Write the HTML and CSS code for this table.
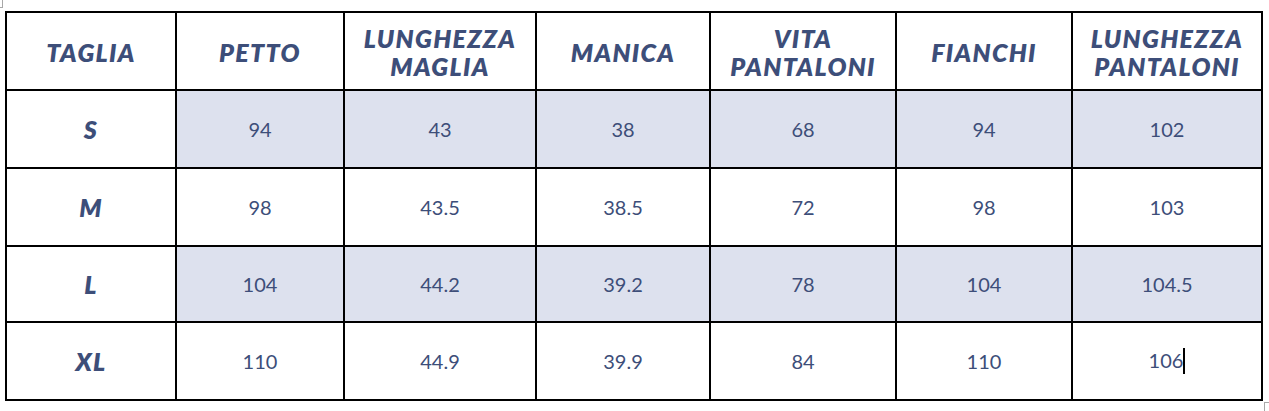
FILE: index.html
```html
<!DOCTYPE html>
<html lang="it">
<head>
<meta charset="utf-8">
<title>Tabella taglie</title>
<link rel="stylesheet" href="styles.css">
</head>
<body>
<span class="mark mark-tl"></span>
<table class="sizes">
  <colgroup>
    <col class="c1"><col class="c2"><col class="c3"><col class="c4"><col class="c5"><col class="c6"><col class="c7">
  </colgroup>
  <thead>
    <tr class="r-head">
      <th>TAGLIA</th>
      <th>PETTO</th>
      <th>LUNGHEZZA<br>MAGLIA</th>
      <th>MANICA</th>
      <th>VITA<br>PANTALONI</th>
      <th>FIANCHI</th>
      <th>LUNGHEZZA<br>PANTALONI</th>
    </tr>
  </thead>
  <tbody>
    <tr class="r-a shaded">
      <th>S</th><td>94</td><td>43</td><td>38</td><td>68</td><td>94</td><td>102</td>
    </tr>
    <tr class="r-a">
      <th>M</th><td>98</td><td>43.5</td><td>38.5</td><td>72</td><td>98</td><td>103</td>
    </tr>
    <tr class="r-b shaded">
      <th>L</th><td>104</td><td>44.2</td><td>39.2</td><td>78</td><td>104</td><td>104.5</td>
    </tr>
    <tr class="r-a">
      <th>XL</th><td>110</td><td>44.9</td><td>39.9</td><td>84</td><td>110</td><td>106<span class="caret"></span></td>
    </tr>
  </tbody>
</table>
<span class="mark mark-br"></span>
</body>
</html>
```

FILE: styles.css
```css
html, body {
  margin: 0;
  padding: 0;
  background: #ffffff;
}

body {
  position: relative;
  width: 1269px;
  height: 411px;
  overflow: hidden;
  padding-top: 11px;
  padding-left: 5px;
  box-sizing: border-box;
}

.sizes {
  border-collapse: separate;
  border-spacing: 0;
  table-layout: fixed;
  width: 1258px;
  border-left: 2px solid #000;
  border-top: 2px solid #000;
  color: #3d4e79;
}

.c1 { width: 170px; }
.c2 { width: 168px; }
.c3 { width: 192px; }
.c4 { width: 174px; }
.c5 { width: 186px; }
.c6 { width: 176px; }
.c7 { width: 190px; }

.sizes th,
.sizes td {
  border-right: 2px solid #000;
  border-bottom: 2px solid #000;
  padding: 0;
  text-align: center;
  vertical-align: middle;
  box-sizing: border-box;
}

.sizes th {
  font-family: "Lato", "Open Sans", sans-serif;
  font-weight: 800;
  font-style: italic;
  font-size: 25px;
  line-height: 28px;
  letter-spacing: 1.3px;
}

.sizes thead th {
  padding-top: 2px;
}

.sizes td {
  font-family: "Lato", "Open Sans", sans-serif;
  font-weight: 400;
  font-size: 20px;
  line-height: 24px;
}

.r-head { height: 78px; }
.r-a { height: 78px; }
.r-b { height: 76px; }

.shaded td {
  background: #dde1ee;
}

.caret {
  display: inline-block;
  width: 2px;
  height: 26px;
  background: #000;
  vertical-align: -6px;
}

.mark {
  position: absolute;
  border-color: #a8a8a8;
  border-style: solid;
}

.mark-tl {
  left: 0;
  top: 0;
  width: 2px;
  height: 7px;
  border-width: 0 1px 1px 0;
}

.mark-br {
  left: 1264px;
  top: 402px;
  width: 6px;
  height: 10px;
  border-width: 1px 0 0 1px;
}
```
